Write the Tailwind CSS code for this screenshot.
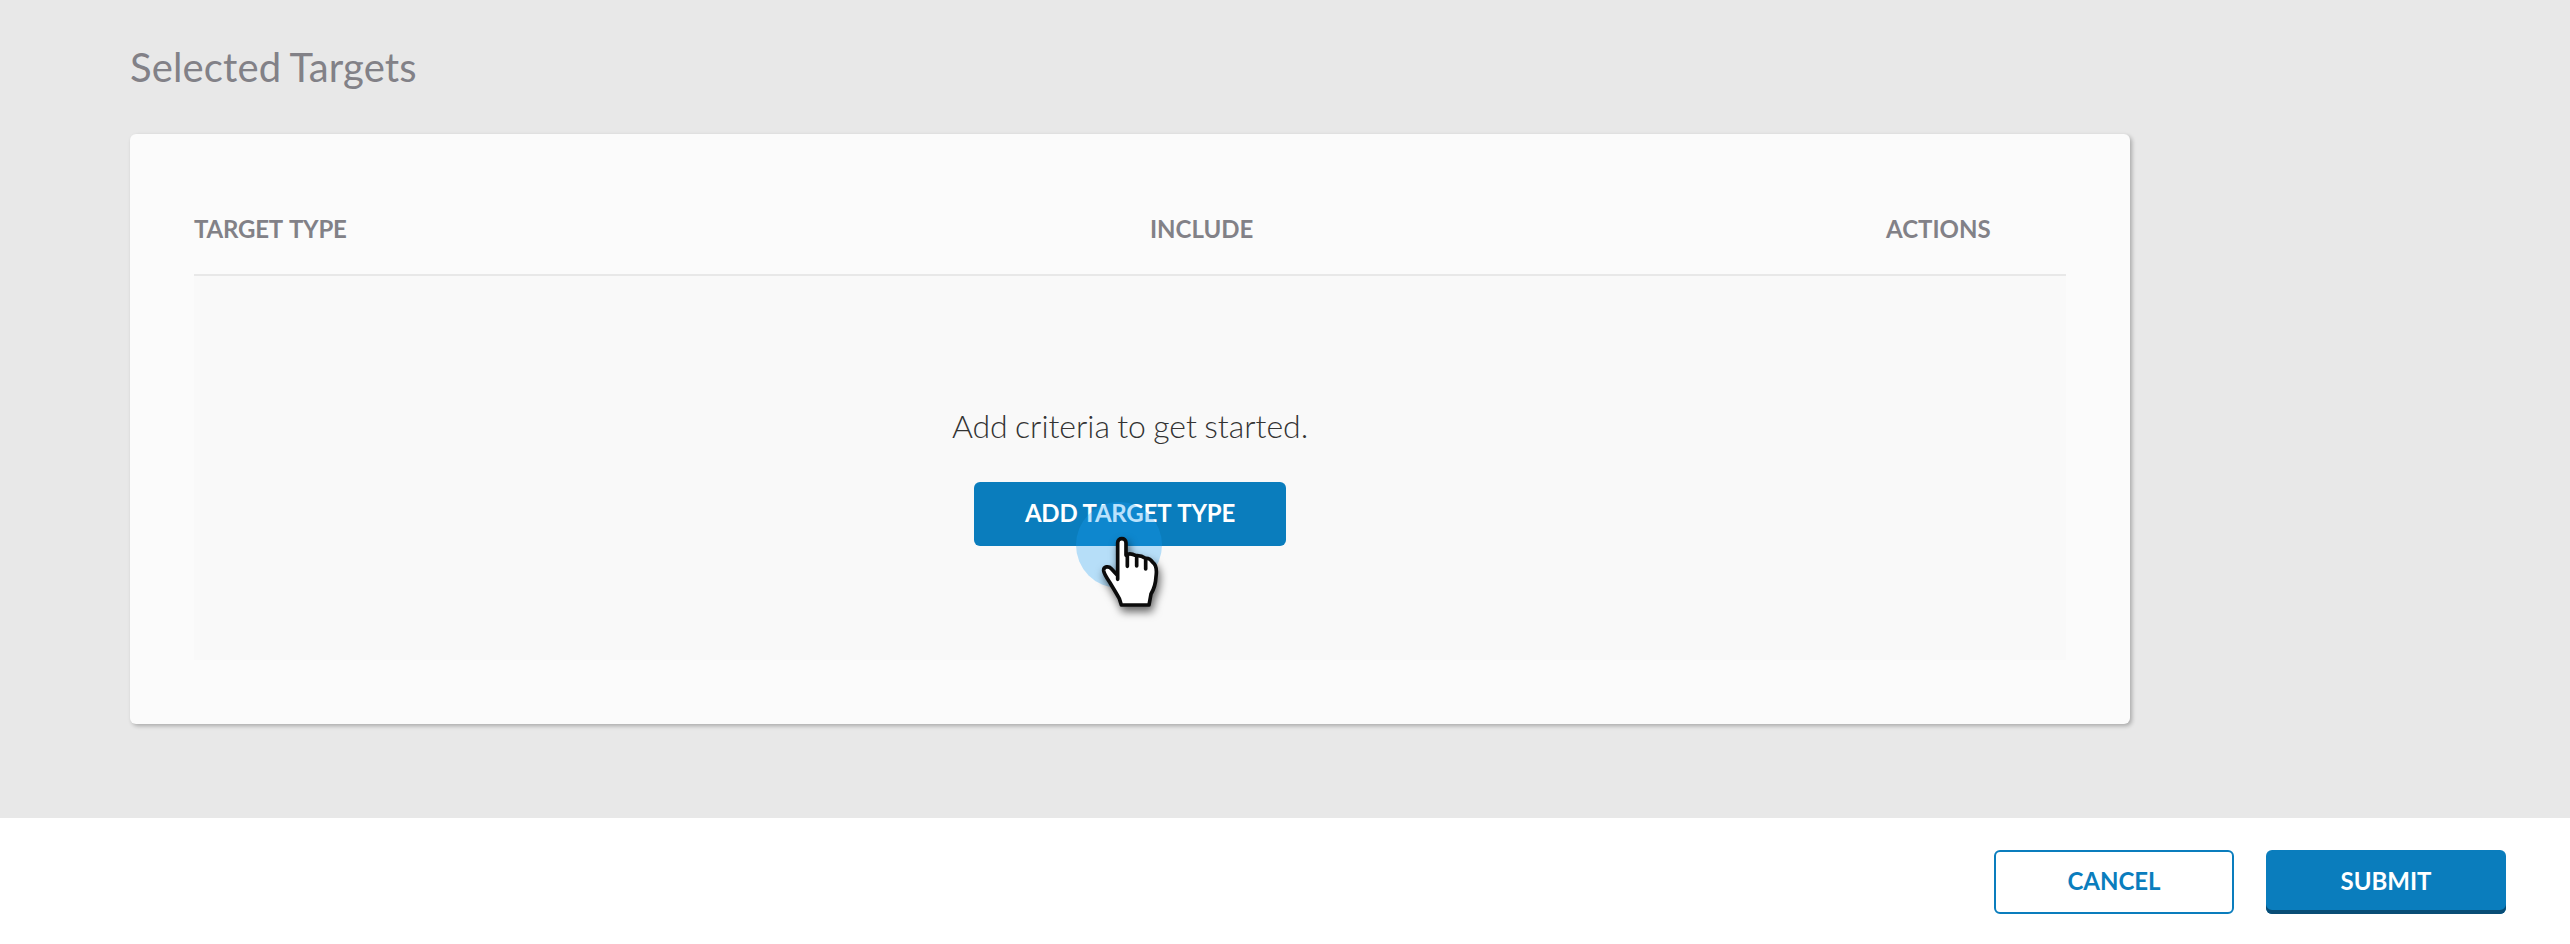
<!DOCTYPE html>
<html lang="en">
<head>
<meta charset="utf-8">
<title>Selected Targets</title>
<script src="https://cdn.jsdelivr.net/npm/@tailwindcss/browser@4"></script>
</head>
<body class="flex h-[944px] w-[2570px] flex-col overflow-hidden bg-[#e8e8e8] font-['Lato',sans-serif]">
  <main class="h-[818px] shrink-0 px-[130px] pt-[43px]">
    <h1 class="h-[91px] text-[40px] leading-[48px] tracking-[0.15px] [word-spacing:-1px] text-[#828187]">Selected Targets</h1>
    <section class="h-[590px] w-[2000px] rounded-md bg-[#fbfbfb] px-16 pt-[70px] shadow-[2px_2px_4px_rgba(0,0,0,0.27)]">
      <div class="flex h-[72px] border-b-2 border-[#e8e8e8] pt-[10px] text-2xl leading-[30px] font-bold text-[#828187]">
        <div class="w-[956px] tracking-[-0.2px]">TARGET<span class="pl-px"> TYPE</span></div>
        <div class="w-[736px]">INCLUDE</div>
        <div>ACTIONS</div>
      </div>
      <div class="flex h-[384px] flex-col items-center bg-[#f9f9f9] pt-[130px]">
        <p class="h-[76px] text-[32px] leading-[40px] font-light tracking-[-0.03px] [word-spacing:-1.3px] text-[#333]">Add criteria to get started.</p>
        <button class="relative h-16 w-[312px] rounded-md bg-[#0a7dbd] pb-[2px] text-2xl leading-[30px] font-bold tracking-[-0.2px] text-white">
          ADD TARGET<span class="pl-px"> TYPE</span>
          <span class="absolute top-[20px] left-[102px] size-[86px] rounded-full bg-[#1a9ff5]/30"></span>
          <svg class="absolute top-[28px] left-[86px] overflow-visible drop-shadow-[2px_5px_4px_rgba(0,0,0,0.6)]" width="130" height="120" viewBox="0 0 390 360" fill="#fff" stroke="#0b0b0b" stroke-width="11" stroke-linejoin="round" stroke-linecap="round">
            <path d="M173 208V98C173 82 198 82 198 98V136C206 129 216 131 228 137C238 136 248 139 256 145C265 144 273 149 278 157C289 165 291 180 288 200C287 222 281 239 273 252L267 285H184L178 266C168 248 155 227 148 215C140 203 132 190 131 182C130 169 146 167 154 176L172 196"/>
            <path fill="none" d="M202 136V169M230 143V168M257 151V177"/>
          </svg>
        </button>
      </div>
    </section>
  </main>
  <footer class="flex flex-1 justify-end gap-8 bg-white pt-8 pr-16">
    <button class="h-16 w-[240px] rounded-md border-2 border-[#0a7dbd] pb-[2px] text-2xl leading-[30px] font-bold text-[#0a7dbd]">CANCEL</button>
    <button class="h-16 w-[240px] rounded-md bg-[#0a7dbd] pb-[2px] text-2xl leading-[30px] font-bold text-white shadow-[inset_0_-4px_0_#094d76]">SUBMIT</button>
  </footer>
</body>
</html>
